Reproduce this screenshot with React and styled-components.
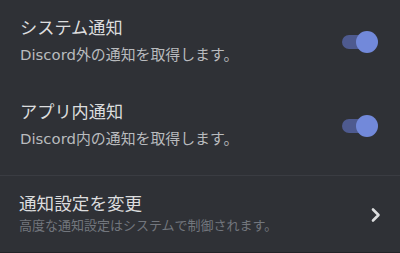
import React, {useState} from 'react';
import styled, {createGlobalStyle} from 'styled-components';

const GlobalStyle = createGlobalStyle`
    html, body {
        margin: 0;
        padding: 0;
        background: #2f3136;
    }
    body {
        font-family: "DejaVu Sans", "Noto Sans CJK JP", sans-serif;
        -webkit-font-smoothing: antialiased;
    }
`;

const Page = styled.div`
    width: 400px;
    height: 253px;
    background: #2f3136;
    overflow: hidden;
`;

const Row = styled.div`
    display: flex;
    align-items: center;
    justify-content: space-between;
    padding: 18px 22px 19px 20px;
    ${p => p.$link && `
        padding: 18px 18px 17px 19px;
        border-top: 1px solid #3a3c42;
        border-bottom: 1px solid #222327;
        margin-top: 7px;
    `}
`;

const Text = styled.div`
    display: flex;
    flex-direction: column;
`;

const Title = styled.span`
    font-size: ${p => p.$wide ? '17.6px' : '17.2px'};
    line-height: 20px;
    color: #dcddde;
`;

const Sub = styled.span`
    font-size: ${p => p.$muted ? '13px' : '14.9px'};
    line-height: ${p => p.$muted ? '18px' : '19px'};
    margin-top: ${p => p.$muted ? '3px' : '8px'};
    color: ${p => p.$muted ? '#72767d' : '#b9bbbe'};
`;

const Toggle = styled.button`
    position: relative;
    width: 36px;
    height: 22px;
    padding: 0;
    border: 0;
    background: transparent;
    cursor: pointer;
    flex-shrink: 0;

    &::before {
        content: '';
        position: absolute;
        left: 0;
        top: 4px;
        width: 26px;
        height: 14px;
        border-radius: 7px;
        background: ${p => p.$on ? '#4e5a8f' : '#72767d'};
    }
    &::after {
        content: '';
        position: absolute;
        top: 0;
        left: ${p => p.$on ? '14px' : '0'};
        width: 22px;
        height: 22px;
        border-radius: 50%;
        background: ${p => p.$on ? '#7289da' : '#dcddde'};
    }
`;

const Chevron = () => (
    <svg width="12" height="16" viewBox="0 0 12 16">
        <polyline points="3,2.5 8.5,8 3,13.5" fill="none" stroke="#dcddde" strokeWidth="2.6" strokeLinecap="round" strokeLinejoin="round" />
    </svg>
);

const SettingToggle = ({title, sub}) => {
    const [on, setOn] = useState(true);
    return (
        <Row>
            <Text>
                <Title>{title}</Title>
                <Sub>{sub}</Sub>
            </Text>
            <Toggle $on={on} onClick={() => setOn(!on)} />
        </Row>
    );
};

export default function App() {
    return (
        <Page>
            <GlobalStyle />
            <SettingToggle title="システム通知" sub="Discord外の通知を取得します。" />
            <SettingToggle title="アプリ内通知" sub="Discord内の通知を取得します。" />
            <Row $link>
                <Text>
                    <Title $wide>通知設定を変更</Title>
                    <Sub $muted>高度な通知設定はシステムで制御されます。</Sub>
                </Text>
                <Chevron />
            </Row>
        </Page>
    );
}
